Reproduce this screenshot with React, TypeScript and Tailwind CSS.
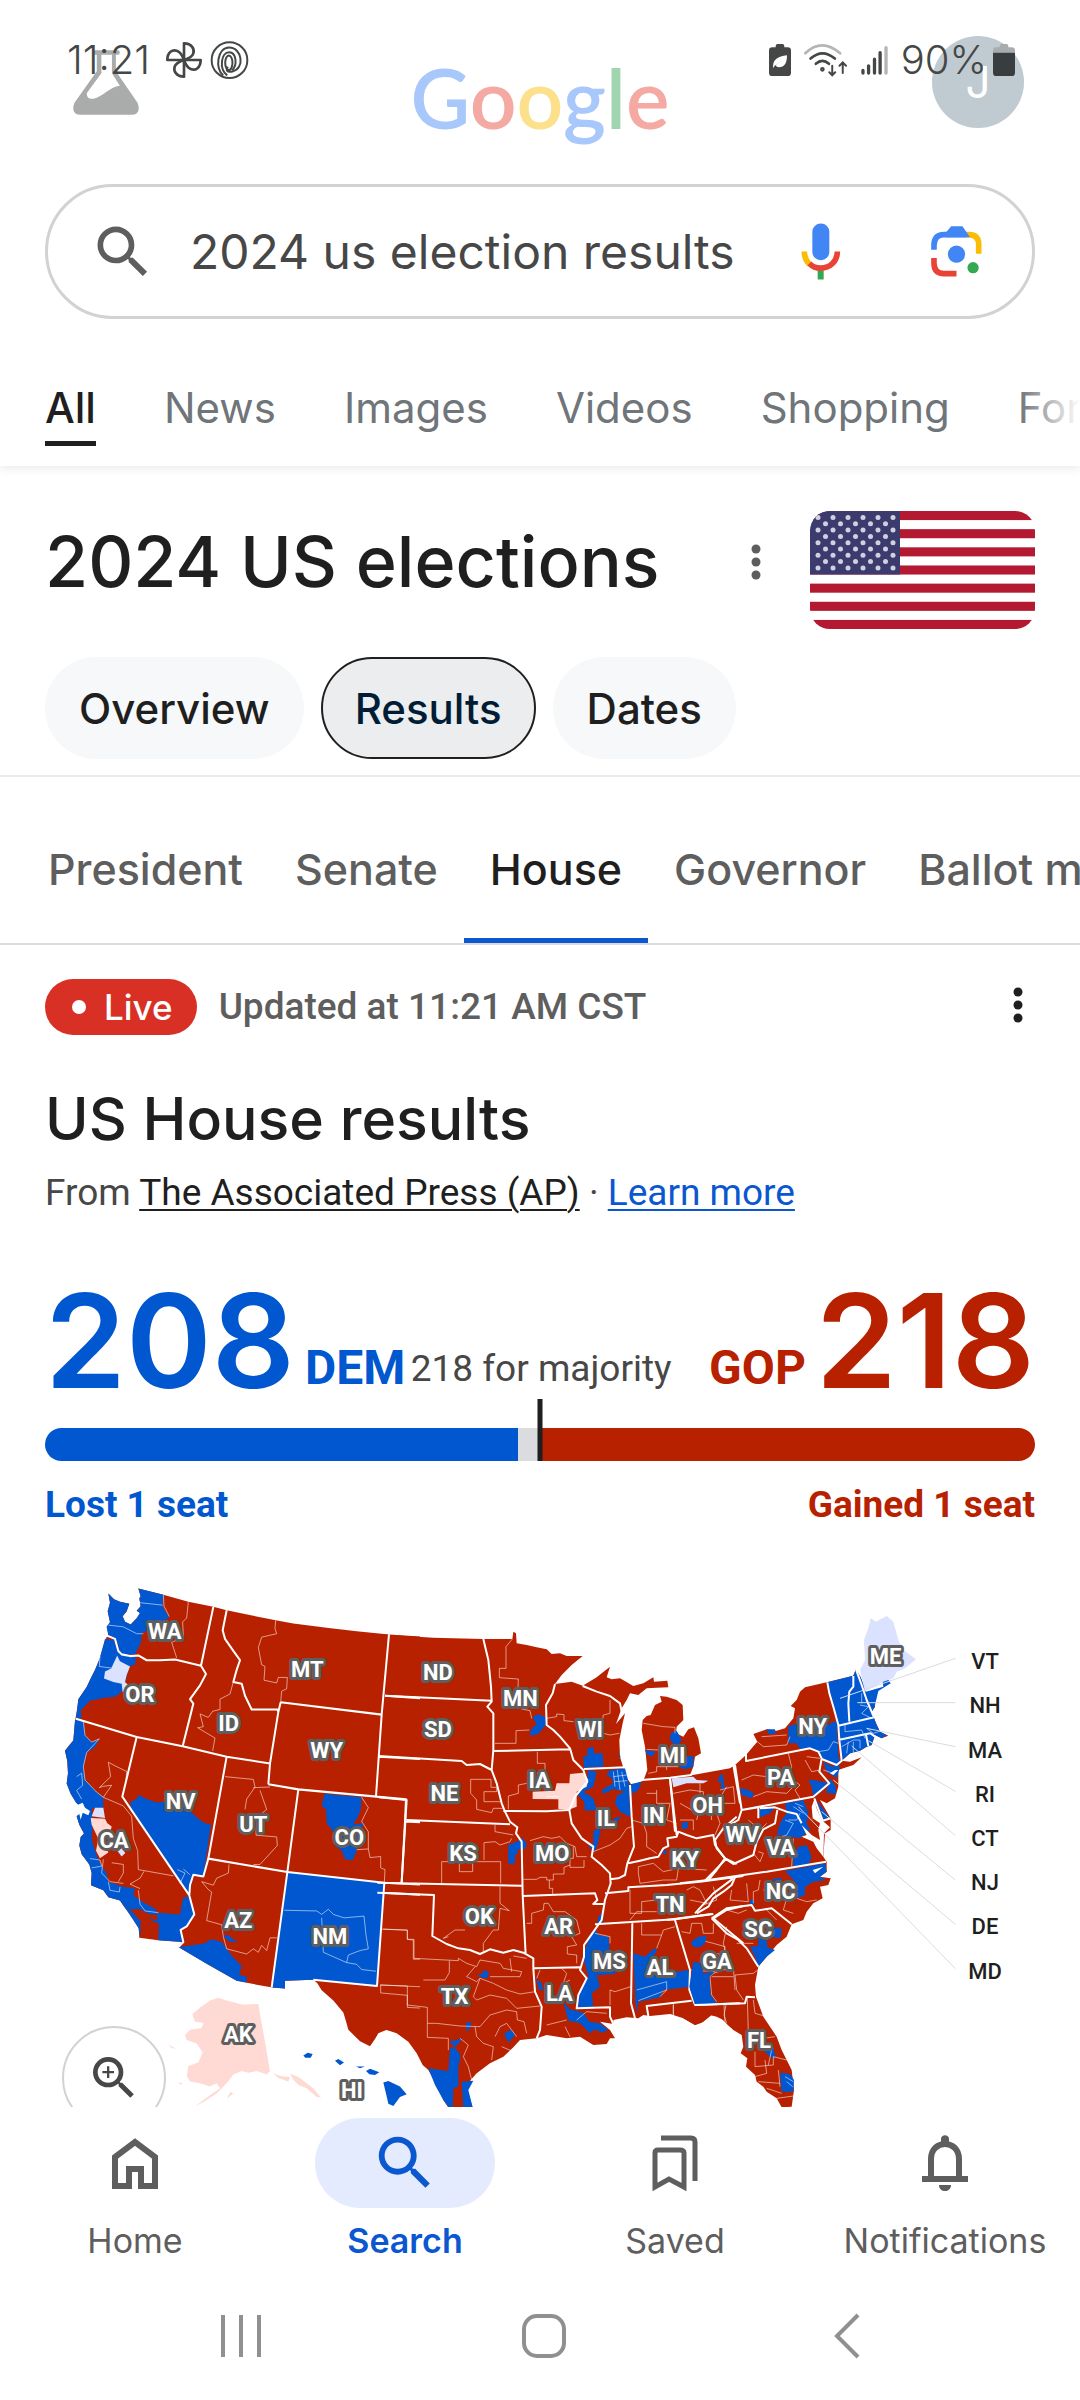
import { MdSearch, MdOutlineZoomIn } from 'react-icons/md';

const searchTabs = ['All', 'News', 'Images', 'Videos', 'Shopping', 'Forums'];
const races = ['President', 'Senate', 'House', 'Governor', 'Ballot measures'];
const chips = ['Overview', 'Results', 'Dates'];

interface MapPart {
  id: string;
  transform: string;
  labelTransform: string;
  land: string[];
  dem: string[];
  gop: string[];
  leanDem: string[];
  leanGop: string[];
  water: string[];
  districts: string[];
  borders: string[];
  labels: [string, number, number][];
}

// Three drawing sheets (west, central, east), placed side by side in one viewBox
const mapParts: MapPart[] = [
  {
    id: 'west',
    transform: 'scale(1 1.0332)',
    labelTransform: 'translate(0 0)',
    land: [
      'M205 68L222 85L240 92L268 98L260 120L248 134L255 150L272 158L290 140L300 125L290 118L302 105L298 82L302 76L295 54L370 72L445 92L520 107L560 117L640 133L707 146L760 155L860 168L950 178L1047 187L1140 193V1418L1132 1390L1115 1365L1090 1345L1065 1340L1040 1335L1015 1345L1005 1362L990 1383L960 1368L925 1335L918 1310L910 1285L880 1250L845 1220L832 1200L820 1190L735 1193V1215L697 1212L650 1204L590 1193L500 1143L415 1095L425 1080L355 1075L298 1068L296 1040L280 1015L262 990L250 975L240 960L205 950L190 930L153 915L155 880L148 855L125 825L118 800L122 775L132 765L118 740L110 715L130 700L125 685L108 675L92 650L80 620L84 590L82 555L75 525L88 508L100 495L105 440L112 400L115 375L140 340L152 315L165 290L178 260L185 240L195 205L205 185L200 165L210 152L203 120L210 95Z',
    ],
    dem: [
      'M205 68L222 85L240 92L268 98L260 120L248 134L255 150L272 158L290 140L300 125L290 118L302 105L298 82L302 76L295 54L370 72L368 102L375 120L388 135L372 150L345 158L322 175L305 185L303 210L285 245L240 245L232 210L205 190L200 165L210 152L203 120L210 95Z',
      'M195 200L225 205L235 240L288 252L285 275L265 280L262 300L250 350L225 368L190 372L150 380L135 395L122 408L125 430L108 432L112 400L115 375L140 340L152 315L165 290L178 260Z',
      'M105 435L130 440L135 480L155 500L178 490L165 515L140 530L130 570L135 610L170 645L190 660L190 690L155 692L158 740L155 780L170 830L185 860L200 880L205 905L250 920L285 925L280 945L310 965L348 985L352 1010L305 1015L300 1068L296 1040L262 990L240 960L205 950L190 930L153 915L155 880L148 855L125 825L118 800L122 775L132 765L118 740L110 715L130 700L108 675L92 650L80 620L84 590L82 555L75 525L100 495Z',
      'M428 955L445 945L462 1000L440 1035L420 1045L430 1080L355 1075L357 1028L325 1012L355 995L420 1000Z',
      'M272 672L290 665L296 653L320 665L350 675L380 672L440 690L475 722L495 735L513 738L490 890L460 885L448 943L272 690Z',
      'M415 1095L490 1085L515 1072L545 1080L575 1120L605 1150L597 1175L620 1180V1198L590 1193L500 1143Z',
      'M548 1062L565 1060L580 1072L595 1078L570 1080Z',
      'M740 877L1033 908L1011 1208L820 1190L735 1193V1215L697 1212Z',
      'M853 650L965 660L962 695L955 715L940 738L975 735L955 755L950 815L938 843L915 840L905 815L885 800L880 760L860 735L858 695L845 685Z',
      'M790 1410L803 1402L818 1405L812 1416L796 1416Z',
      'M885 1425L895 1420L912 1430L900 1438Z',
      'M948 1442L975 1442L960 1447Z',
      'M978 1455L990 1448L1018 1458L1005 1466L988 1464Z',
      'M1030 1488L1045 1484L1080 1500L1100 1522L1080 1530L1060 1556L1045 1550L1038 1520Z',
    ],
    gop: ['M268 985L300 985L330 1000L350 1000L352 1018L325 1012L300 1020L285 1000Z', 'M300 1025L330 1018L355 1030L350 1072L305 1066Z'],
    leanDem: [
      'M232 250L240 265L270 280L260 305L255 325L265 335L248 355L245 330L220 325L192 315L195 295L215 285Z',
      'M165 690L190 690L195 720L155 715Z',
      'M232 815L245 808L256 822L245 832Z',
    ],
    leanGop: [
      'M152 720L195 722L202 735L215 745L210 765L190 790L205 820L180 837L168 815L175 780L155 740Z',
      'M457 1290L480 1270L510 1250L535 1242L560 1250L610 1262L655 1260L662 1300L675 1370L690 1455L680 1465L650 1455L625 1460L605 1455L580 1465L560 1490L530 1520L490 1545L465 1558L495 1535L540 1505L530 1490L510 1500L480 1490L450 1485L440 1470L445 1440L475 1430L488 1400L470 1375L440 1365L435 1350L450 1335L485 1330L490 1315L465 1312Z',
      'M700 1462L725 1470L750 1472L745 1485L715 1475Z',
      'M750 1462L775 1472L800 1490L820 1505L843 1532L830 1530L800 1505L775 1495L760 1480Z',
      'M385 1378L408 1390L395 1388Z',
      'M415 1488L430 1490L420 1494Z',
      'M560 1535L572 1515L580 1520Z',
    ],
    water: ['M112 682L128 676L135 690L150 700L145 712L128 705L122 725L116 700Z'],
    districts: [
      'M205 160L250 165L290 185L310 185',
      'M300 95L368 102',
      'M445 92L440 140L428 150L430 195L395 210L405 240L410 255',
      'M370 72L372 105L388 135',
      'M180 250L178 280L215 285L232 250',
      'M707 146L705 170L710 185L665 195L655 225L665 275L675 280L672 320L710 328L715 312L742 312L740 345L725 352L722 384',
      'M580 325L570 360L540 375L540 405L518 410L505 428L480 418L490 455L473 458L525 488L518 525',
      'M130 440L135 480L155 500L178 490L140 530L130 570L135 610L170 645L190 660L215 625L190 628L178 632L212 600L205 558L228 570L260 585L258 610',
      'M190 660L250 685L275 715L280 780L293 815L295 870L400 888',
      'M215 850L250 855L250 880L235 905M312 875L300 895L270 912L300 925M190 840L185 880L210 905L250 910',
      'M295 930L300 970L315 990L355 995',
      'M555 600L640 608L645 630L620 665L615 695M640 632L690 630M660 640L680 695L650 720L648 770L710 775L712 800L660 855L640 855',
      'M567 855L565 880L530 895L520 915L485 905L505 928L515 935L500 1018L545 1030L550 1065L560 1100L620 1115L640 1100L655 1110L665 1090L680 1105L690 1068L710 1068',
      'M733 988L830 990L845 1000L865 985L880 1000L912 1010L972 1005L978 1060L985 1100L960 1105L925 1118L920 1140L850 1110L845 1010',
      'M920 1140L950 1145L965 1160L1008 1165',
      'M965 660L985 690L965 730L985 760L985 810L950 812M985 810L990 835L1022 832L1022 865L1035 870L1033 908',
      'M1030 1043L1102 1046L1102 1072L1120 1075L1120 1130L1140 1130M1022 1205L1140 1210M1022 1205V1228L1102 1235V1270L1140 1272',
      'M412 870L435 880L420 910M430 868L450 885',
      'M150 838L180 842L185 860L155 865M205 905L210 930L238 935L240 920',
      'M110 600L125 590L128 625L110 640L125 665',
    ],
    borders: [
      'M200 190L225 200L235 235L245 245L270 250L295 248L320 262L360 262L405 260L483 278',
      'M108 432L290 485L428 512L560 542L690 562',
      'M520 107L483 278L498 302L480 335L450 375L460 388L428 512',
      'M560 117L548 175L555 200L580 235L600 262L590 290L580 325L605 330L615 365L635 405L712 405L715 412',
      'M722 384L715 412L690 562L685 622',
      'M722 384L1025 420',
      'M1047 187L1025 420L1008 657',
      'M1035 365L1140 372M1018 542L1140 549',
      'M685 622L775 637L1098 666L1095 730L1085 907M1095 730L1140 732',
      'M775 637L742 877M505 838L742 877L1033 908L1140 913',
      'M560 542L505 838L490 890L460 885L450 915L448 945L463 1000L440 1035L422 1045L430 1080L415 1095',
      'M290 485L247 658L448 945',
      'M742 877L695 1212',
      'M1033 908L1011 1208L820 1190M1030 937L1140 943',
    ],
    labels: [
      ['WA', 374, 184], ['OR', 300, 372], ['ID', 566, 460], ['MT', 802, 298], ['WY', 860, 542], ['NV', 422, 695],
      ['UT', 640, 763], ['CO', 928, 802], ['CA', 222, 811], ['AZ', 595, 1052], ['NM', 870, 1098], ['AK', 595, 1393], ['HI', 936, 1562],
    ],
  },
  {
    id: 'central',
    transform: 'translate(1020 60)',
    labelTransform: 'translate(1020 60)',
    land: [
      'M-20 131L30 135L160 143L310 147L397 147L400 125L408 130L410 160L440 165L470 172L500 178L515 192L540 190L560 198L608 198L575 225L545 255L525 282L575 275L608 287L650 262L665 250L690 230L680 262L695 268L720 265L760 288L790 280L820 262L822 275L862 272L865 292L830 293L800 295L775 315L750 310L740 330L725 355L708 402L735 370L728 400L718 450L720 500L738 560L755 585L790 572L802 540L795 470L785 420L788 390L800 378L812 375L825 345L845 335L840 318L860 320L890 330L908 345L910 390L890 410L888 430L910 440L925 418L942 412L955 445L963 490L945 500L940 530L930 555L965 578L1000 565L1030 550L1060 530L1100 505V1335L1080 1328L1050 1310L1030 1290L1010 1280L990 1275L965 1298L945 1305L910 1285L870 1272L810 1278L790 1275L775 1285L740 1282L700 1290L700 1302L660 1295L690 1320L705 1345L690 1345L680 1362L640 1365L600 1340L560 1345L500 1335L470 1345L420 1350L400 1372L370 1400L330 1420L290 1450L272 1470L262 1500L280 1560L210 1560L190 1530L170 1485L145 1440L128 1425L110 1390L85 1355L50 1330L20 1320L-20 1325Z',
    ],
    dem: [
      'M645 1015L655 1035L685 1040L690 1090L705 1125V1152L650 1155L660 1190L635 1210L640 1250L595 1252L595 1215L625 1160L610 1100L625 1050Z',
      'M550 1235L570 1258L610 1268L628 1295L660 1300L685 1320L665 1328L645 1318L630 1330L600 1300L565 1292Z',
      'M468 1165L485 1180L490 1200L478 1200Z',
      'M625 540L650 545L640 590L610 605L640 625L650 660L615 662L612 635L590 610L620 580Z',
      'M665 600L700 580L695 565L680 555L690 540L735 535L748 585L750 680L720 665L705 640L712 615L735 605L700 597L670 612Z',
      'M700 685L725 680L705 700Z',
      'M640 722L662 715L655 755L645 785L625 770L640 760Z',
      'M610 500L622 498V475L640 470L642 490H668L670 530L612 533Z',
      'M458 380L475 373L497 382L497 405L475 432L448 437L455 415L470 403Z',
      'M385 765L410 755L428 745L440 760L438 775L412 780L413 792L405 795V820L385 822Z',
      'M145 1435L205 1443L210 1375L222 1370L242 1395L235 1430L235 1490L220 1495L218 1560L205 1550L190 1530L165 1485Z',
      'M245 1475L280 1472L265 1500L280 1560L250 1560Z',
      'M372 1330L395 1320L405 1335L385 1358Z',
      'M258 1298L275 1296L268 1318L260 1325Z',
      'M208 1355L248 1345L225 1372Z',
      'M290 1155L305 1152L312 1140L325 1145V1163L308 1163Z',
      'M655 980L670 965L668 1000L652 998Z',
      'M750 583L785 575L775 600L755 612Z',
      'M760 1090L795 1100L822 1075L832 1080L800 1130V1158L925 1140L930 1190L850 1200L840 1222L775 1235L768 1270Z',
      'M872 430L890 422L905 450L890 470L870 450Z',
      'M795 480L828 485L815 500L800 492Z',
      'M895 530L915 500L940 497L940 530L915 538Z',
      'M715 488L722 500L718 505Z',
      'M845 785L862 780L855 795Z',
      'M905 700L922 695V715L905 718Z',
    ],
    gop: ['M672 475L712 470L714 505L690 515L672 512Z'],
    leanDem: [],
    leanGop: ['M570 552L610 548L625 570L620 590L590 605L590 650L570 658L535 657V628L458 627V605L525 602L530 580L568 580Z'],
    water: [],
    districts: [
      'M397 147L378 170V235H358V263L415 267L412 345L425 357L450 362L455 385',
      'M345 460H408V422L448 420M500 385L530 380V372L552 374V392L580 395',
      'M640 400L665 405L670 375L690 370V330M670 405L670 430L690 435L718 430',
      'M472 485V520H495V545L470 550M385 658V618L415 610V585L440 580M500 620H535',
      'M272 568H333V592H350V605H312V635H360M272 568V610L290 630V658L335 668L340 655H370',
      'M345 705V725L400 735M185 880V815H362V880M238 820V845H278V820M312 810V758L345 755L360 765L390 755L395 745',
      'M450 752L490 740L515 745L540 740L560 760L585 770L590 800H620M580 770V805H570V832H612V810',
      'M430 868H470L480 862H500V870H520V852H552V832L570 825M508 870V895H518V912',
      'M360 890V940L388 962L360 955L355 1020L340 1020L310 1060V1085M190 1045L225 1020H255M190 1045L205 1040',
      'M440 1000H455V970L490 960L492 940H505L520 965L555 965L590 990L600 1030L575 1040L590 1065L562 1070V1092L590 1095V1120',
      'M0 1017L82 1020V1048H102V1105L235 1112V1105L260 1120L290 1130L300 1110L360 1120L370 1135L425 1145L420 1160L330 1160',
      'M208 1112V1148L195 1170L130 1170M0 1185L82 1188V1215L82 1245L142 1252V1300L170 1300L240 1308',
      'M142 1300V1342L205 1345L205 1380M285 1130L260 1160L290 1175L300 1165L340 1180L380 1200L420 1212L465 1205',
      'M300 1165L280 1220L290 1230L330 1215L380 1225L410 1255L480 1248M240 1308L300 1310L330 1275L380 1260L410 1265L412 1290L432 1295L440 1330',
      'M285 1310L290 1340L310 1360L340 1370L335 1410M240 1345L265 1365L250 1400L265 1430L275 1470M345 1340L360 1310L380 1300L410 1340M365 1370L400 1385',
      'M390 1105L395 1145M400 1098L440 1105',
      'M480 1140L470 1165M545 1135L560 1150L550 1180L570 1170M500 1305L560 1290M590 1290L620 1265L680 1270M555 1310L570 1340',
      'M690 1200L705 1205L752 1190M690 1200V1245M690 1060V1040L645 1030',
      'M785 1000V1035H845L850 1020L885 1010M845 1035L830 1075M905 1025L930 1030L935 1000H965L970 1030L1000 1030L1000 1000M960 1050L1000 1060L1035 1070L1030 1130M1000 1150L1060 1130L1065 1200',
      'M930 1140L1005 1145L990 1160L995 1215L1010 1235',
      'M750 900V970H785V935L830 930M830 965H770L750 990M920 900L940 890L960 900L980 940L930 930M1000 890L1010 930L970 945',
      'M775 830L820 820L850 845L895 835L890 870H850L780 880L775 850ZM895 835L980 840',
      'M755 690L790 700L800 730V770L830 790M830 600V640L870 640M800 610H830M870 640L860 690L890 700',
      'M880 610L930 600L970 605V640L1010 640L1040 590M950 690L960 650L1000 640L1020 700L1005 735M900 690H940V720',
      'M790 400L850 410L885 412V430M805 550L830 545V530L895 530M860 530V540M800 478L835 480',
      'M640 785L690 765L720 745L740 715L755 710',
      'M775 1232L860 1200L860 1175L770 1200M840 1220L860 1200',
      'M700 545L705 590M712 540L720 600M725 545L735 590M700 560L740 555M704 575L742 572',
      'M880 1240V1280L870 1272M1032 1245L1036 1320',
    ],
    borders: [
      'M15 317L335 332M-5 498L245 513L260 525L300 522L335 540L350 580L365 640L375 665L390 695L412 712L408 730L425 755L428 915L437 1095',
      'M310 147L325 210L333 290L335 335L322 350L340 370V480L335 540',
      'M340 483L570 478M370 663L500 664L565 660',
      'M80 690L390 703M-3 622L80 630L65 877M-8 878L425 887',
      'M-8 908L162 915L157 1038L200 1062L235 1075L270 1080L300 1092L330 1078L370 1088L400 1080L430 1088L460 1105V1135L600 1132',
      'M430 918L645 910L652 930L640 942L675 942',
      'M525 282L518 310L498 345L500 405L520 420L540 440L570 475L580 510L610 540L622 575L585 620L568 660L575 700L605 745L640 770L635 800L665 825L690 850L692 880L675 930L665 990L630 1040L612 1065L612 1100L600 1140L620 1165L595 1215L590 1255L690 1252L690 1280L700 1302',
      'M460 1135L465 1205L485 1250L480 1320L470 1345',
      'M612 537L735 532',
      'M608 288L650 305L690 318L720 340L725 365',
      'M750 585L755 680L762 770L742 820L735 855L715 865L690 868',
      'M745 820L780 812L810 805L835 800L850 775L865 768L862 745L890 740L895 725L920 735L950 745L1000 735L1005 765L1035 805L1070 822',
      'M755 572L870 563L935 555M870 565L890 735',
      'M675 910L745 903V892L860 885L960 875L1090 858M975 872L1040 805',
      'M645 1003L885 988L1000 972',
      'M757 1000L753 1240L765 1285M885 990L930 1140L928 1200L945 1245L1080 1240M805 1278L800 1248L935 1232',
      'M945 970L1000 910L1060 865M1000 985L1040 960L1090 948M1000 985L1030 1010L1090 1060',
      'M1060 525L1080 640M1030 715L1070 680',
    ],
    labels: [
      ['ND', 174, 246], ['SD', 174, 418], ['NE', 193, 610], ['KS', 249, 790], ['OK', 298, 978], ['TX', 224, 1218], ['MN', 421, 324],
      ['IA', 478, 572], ['MO', 517, 790], ['AR', 536, 1008], ['LA', 538, 1210], ['WI', 630, 418], ['IL', 678, 686], ['MS', 688, 1113],
      ['MI', 878, 496], ['IN', 821, 676], ['OH', 983, 646], ['KY', 915, 808], ['TN', 870, 942], ['AL', 840, 1133], ['GA', 1011, 1113],
    ],
  },
  {
    id: 'east',
    transform: 'translate(1740 60)',
    labelTransform: 'translate(1740 60)',
    land: [
      'M330 535L345 525L378 495L395 475L412 455L400 432L440 418L470 422L495 415L520 385L525 355L512 348L530 330L540 305L555 292L620 277L700 257L708 238L722 262L740 310L770 300L762 330L765 350L755 365L768 400L780 425L805 437L785 445L765 435L755 465L740 470L720 482L690 490L665 512L690 515L725 502L700 525L670 535L655 540L655 590L645 625L620 640L600 630L632 685L632 720L615 730L610 800L620 815L620 845L600 860L632 865L625 885L600 890L608 925L580 940L560 965L550 990L515 1003L500 1040L470 1065L440 1100L415 1130L405 1185L408 1220L430 1280L470 1340L485 1380L515 1440L522 1500L515 1550L485 1552L470 1525L440 1505L430 1490L410 1475L405 1455L378 1430L382 1405L362 1390L370 1370L365 1335L340 1320L318 1300L300 1280L275 1275L250 1295L225 1305L190 1285V560Z',
    ],
    dem: [
      'M622 277L700 257L708 238L722 262L740 310L770 300L762 330L765 350L755 365L768 400L780 425L800 435L785 445L765 435L755 465L740 470L720 482L690 490L665 512L658 450L650 395L640 340L628 310Z',
      'M738 305L790 290L785 250L800 262L812 280L775 303L765 345L755 360Z',
      'M505 408L540 400L620 405L650 392L655 500L660 512L655 540L640 525L605 505L595 485L570 475L540 478L530 460L505 460Z',
      'M440 418H465V432H445Z',
      'M565 568L590 572L625 580L605 605L580 617L575 590Z',
      'M360 595L380 598L402 610L395 625L365 615Z',
      'M610 515L640 530L660 530L650 565L620 545Z',
      'M630 565L648 590L648 612L618 608Z',
      'M590 630L630 685L610 690Z',
      'M495 640L550 630L565 670L560 700L570 720L540 745L500 738L470 735L480 700L500 668Z',
      'M417 657L465 652L450 670L420 682Z',
      'M535 770L560 765L575 800L565 825L520 830L518 800Z',
      'M495 843L615 820L620 845L600 860L618 870L580 875L555 890L555 915L530 925L530 880Z',
      'M460 865H485V885H460Z',
      'M390 930H402V942H390Z',
      'M390 1070L415 1068L415 1042L440 1050L442 1072L465 1080L440 1100L415 1130L405 1100Z',
      'M465 1012L487 1018L480 1045L455 1040Z',
      'M220 1115L245 1120L250 1150L285 1145L268 1160L272 1215L290 1240L225 1245L208 1190Z',
      'M213 1055L235 1040L260 1037L255 1060L240 1072L218 1070Z',
      'M430 1380L460 1370L467 1405L450 1400Z',
      'M480 1448L510 1452L522 1470L520 1505H485Z',
      'M300 555L308 552L315 598L303 598V575H292Z',
      'M188 697H203V715H188Z',
    ],
    gop: [],
    leanDem: [
      'M745 115L752 85L768 95L800 78L820 95L835 150L850 180L888 208L855 235L830 245L820 265L790 275L735 305L720 240L735 210L732 150Z',
      'M155 565L220 560L230 570L265 572L250 580L200 580L160 592Z',
    ],
    leanGop: [],
    water: [
      'M583 628L575 650L578 685L600 700L595 720L600 750L575 735L545 705L560 735L545 740L580 755L590 775L610 800L612 730L630 712L605 690L590 655Z',
      'M655 540L640 555L630 550L645 540Z',
      'M578 840L610 830L585 850Z',
    ],
    districts: [
      'M412 455L430 470L500 465L510 440M425 440L500 435',
      'M505 490L515 530L505 560L540 585L525 600L540 625M365 570L400 555L440 560M400 620L440 605L500 610L520 590',
      'M555 510L575 545L600 540M560 500L600 505M595 485L625 480L640 455L655 460M610 540L640 550',
      'M385 690L420 720L440 700M400 790L420 815L430 790L415 785M500 735L520 700L495 690M520 745L515 830M500 735L470 745L460 790',
      'M380 880L385 935L330 930L335 900M420 870L415 900L400 905V940M430 900H460M500 925L490 960L520 970M530 925L560 935L590 930M460 930L500 925',
      'M320 960L355 970L380 960M440 960L470 990M350 1060L400 1060M440 1050V1020',
      'M320 1010L310 1060L320 1100L290 1090M345 1155L400 1150L420 1135M345 1155L350 1200L370 1230M275 1160L340 1160',
      'M160 1245V1280M318 1245L312 1275L320 1300M382 1222L385 1330M400 1230L405 1270L440 1280M385 1330L430 1345L465 1340M405 1385V1430L460 1425V1400L500 1410M405 1460L440 1450L435 1410M415 1475L480 1480M440 1495L485 1510M470 1525L520 1518M455 1380L445 1425M475 1440L480 1490',
      'M675 405V425L725 420L735 445M665 470L700 450L720 450V475M700 455V490M685 455L680 490M720 345L745 350L725 370L755 385M725 340V310M740 415L760 430L790 420',
      'M505 690L530 690L540 670M520 650L550 670M525 640L550 650',
      'M225 620L240 650L270 645L275 690M300 600L340 590L345 640L310 640M180 640L215 660M240 610V580',
      'M495 1460L520 1475M500 1475L518 1490',
    ],
    borders: [
      'M378 490V513L570 475L595 485L605 505L598 545L628 580L580 620L365 660L345 525',
      'M622 277L628 310L640 350L655 405L658 450L665 512L650 525L605 507',
      'M655 407L762 382M655 450L735 433L752 430L765 440M738 435L745 468',
      'M700 258V290L688 305L685 340L688 395M708 238L725 285L740 330L762 382',
      'M365 660L355 690L310 715L285 750L290 775L315 805L340 822L400 795L410 755L430 718L465 700L472 660',
      'M365 660L415 652L415 685M420 655L465 652L500 665L530 672L545 700',
      'M180 880L265 870L440 845L618 815M315 805L290 840L265 870',
      'M345 862L335 885L310 905L280 925L265 950L230 970',
      'M140 990L275 972M275 985L320 955L395 945L405 962L455 955L515 1003',
      'M275 985L320 1030L355 1050L380 1075L415 1130',
      'M225 1245L375 1240L380 1220L405 1222',
      'M583 625L608 692L632 685M150 565L165 725',
    ],
    labels: [['NY', 578, 408], ['PA', 482, 562], ['WV', 367, 733], ['VA', 482, 772], ['NC', 482, 904], ['SC', 415, 1018], ['FL', 417, 1352], ['ME', 797, 199]],
  },
];

const callouts = [
  { name: 'VT', y: 213, line: 'M660 325L1006 205' },
  { name: 'NH', y: 345, line: 'M712 338H1006' },
  { name: 'MA', y: 480, line: 'M740 415L1006 470' },
  { name: 'RI', y: 612, line: 'M745 452L1006 604' },
  { name: 'CT', y: 745, line: 'M695 468L1006 737' },
  { name: 'NJ', y: 878, line: 'M640 570L1006 870' },
  { name: 'DE', y: 1010, line: 'M605 665L1006 1003' },
  { name: 'MD', y: 1145, line: 'M535 650L1006 1136' },
];

function Shapes({ paths, className }: { paths: string[]; className: string }) {
  return <path d={paths.join('')} className={className} />;
}

function ElectionMap() {
  return (
    <svg viewBox="0 0 3000 1680" className="block w-full font-[Roboto,sans-serif]" role="img" aria-label="US House results by district">
      {mapParts.map((part) => (
        <g key={part.id} transform={part.transform}>
          <Shapes paths={part.land} className="fill-[#b72100]" />
        </g>
      ))}
      {mapParts.map((part) => (
        <g key={part.id} transform={part.transform}>
          <Shapes paths={part.dem} className="fill-[#0057d0]" />
          <Shapes paths={part.gop} className="fill-[#b72100]" />
          <Shapes paths={part.leanDem} className="fill-[#dae2ff]" />
          <Shapes paths={part.leanGop} className="fill-[#ffdad4]" />
          <Shapes paths={part.water} className="fill-white" />
          <Shapes paths={part.districts} className="fill-none stroke-white/80 stroke-2" />
          <path d={part.borders.join('')} strokeWidth={6} className="fill-none stroke-white" strokeLinejoin="round" />
        </g>
      ))}
      <g transform="translate(1740 60)">
        {callouts.map((c) => (
          <g key={c.name}>
            <path d={c.line} strokeWidth={3} className="fill-none stroke-[#dadce0]" />
            <text x={1095} y={c.y + 23} textAnchor="middle" fontSize={66} className="fill-[#1f1f1f] font-medium">
              {c.name}
            </text>
          </g>
        ))}
      </g>
      {mapParts.map((part) => (
        <g key={part.id} transform={part.labelTransform}>
          {part.labels.map(([name, x, y]) => (
            <text
              key={name}
              x={x}
              y={y + 23}
              textAnchor="middle"
              fontSize={66}
              strokeWidth={18}
              paintOrder="stroke"
              strokeLinejoin="round"
              className="fill-white stroke-[#5e5e5e] font-bold"
            >
              {name}
            </text>
          ))}
        </g>
      ))}
    </svg>
  );
}

function UsFlag() {
  const stars = [];
  for (let row = 0; row < 9; row++) {
    for (let col = 0; col < (row % 2 ? 5 : 6); col++) {
      stars.push(<circle key={`${row}-${col}`} cx={8 + col * 15 + (row % 2 ? 7.5 : 0)} cy={6.5 + row * 6.3} r={2.5} fill="#d0d0e0" />);
    }
  }
  return (
    <svg viewBox="0 0 225 118" className="h-[118px] w-[225px] shrink-0 rounded-[20px]" role="img" aria-label="US flag">
      <rect width="225" height="118" fill="#fff" />
      {[0, 1, 2, 3, 4, 5, 6].map((i) => (
        <rect key={i} y={(i * 2 * 118) / 13} width="225" height={118 / 13} fill="#b31931" />
      ))}
      <rect width="90" height="63.5" fill="#3c3b6e" />
      {stars}
    </svg>
  );
}

function MoreDots() {
  return (
    <svg viewBox="0 0 10 36" className="h-9 w-[10px]" fill="currentColor" aria-hidden="true">
      <circle cx="5" cy="5" r="4.5" />
      <circle cx="5" cy="18" r="4.5" />
      <circle cx="5" cy="31" r="4.5" />
    </svg>
  );
}

function StatusBar() {
  return (
    <div className="absolute inset-x-0 top-[36px] flex h-12 items-center justify-between pr-[65px] pl-[67px] font-[Inter,sans-serif] text-[40px] leading-[48px] font-light text-[#444746]">
      <div className="flex items-center gap-4">
        <span>11:21</span>
        <svg viewBox="0 0 108 108" className="h-9 w-9" fill="none" stroke="currentColor" strokeWidth="8" strokeLinejoin="round">
          <path d="M54 54V4C78 4 86 22 82 34C78 46 66 50 54 54Z" />
          <path d="M54 54H104C104 78 88 86 76 82C64 78 58 66 54 54Z" />
          <path d="M54 54V104C30 104 22 86 26 74C30 62 42 58 54 54Z" />
          <path d="M54 54H4C4 30 20 22 32 26C44 30 50 42 54 54Z" />
        </svg>
        <svg viewBox="0 0 118 118" className="-ml-2 h-[39px] w-[39px]" fill="none" stroke="currentColor" strokeWidth="6">
          <circle cx="59" cy="58" r="54" />
          <path d="M40 104C14 84 22 20 58 20C98 20 106 84 68 92C50 96 48 88 54 78" />
          <path d="M52 104C26 84 34 34 58 34C80 34 84 76 66 88" />
          <ellipse cx="57" cy="66" rx="11" ry="22" />
        </svg>
      </div>
      <div className="flex items-center gap-[13px]">
        <svg viewBox="0 0 66 96" className="h-8 w-[22px]">
          <path d="M20 10V6Q20 0 26 0H40Q46 0 46 6V10H56Q66 10 66 20V86Q66 96 56 96H10Q0 96 0 86V20Q0 10 10 10Z" fill="currentColor" />
          <path d="M12 68Q12 38 54 34Q54 70 30 70Q22 70 20 64L38 50L16 66L14 72Z" fill="#fff" />
        </svg>
        <svg viewBox="0 0 134 100" className="h-[33px] w-11" fill="none" stroke="currentColor" strokeWidth="8" strokeLinecap="round">
          <path d="M4 28Q54 -20 110 28" opacity=".4" />
          <path d="M20 44Q56 12 94 44M36 60Q56 42 76 60" />
          <circle cx="56" cy="77" r="3" />
          <path d="M86 66V94M77 86L86 95L95 86M118 88V56M108 66L118 56L128 66" strokeWidth="6" />
        </svg>
        <svg viewBox="0 0 80 88" className="h-[29px] w-[27px]" stroke="currentColor" strokeWidth="10" strokeLinecap="round">
          <path d="M5 74V82M22 60V82M40 40V82M57 20V82" />
          <path d="M75 5V82" opacity=".4" />
        </svg>
        <div className="flex items-center gap-[6px]">
          <span>90%</span>
          <svg viewBox="0 0 66 96" className="h-8 w-[22px]">
            <path d="M20 10V6Q20 0 26 0H40Q46 0 46 6V10H56Q66 10 66 20V26H0V20Q0 10 10 10Z" fill="#a9acad" />
            <path d="M0 26H66V86Q66 96 56 96H10Q0 96 0 86Z" fill="#3a3d3f" />
          </svg>
        </div>
      </div>
    </div>
  );
}

function Header() {
  return (
    <header className="relative shrink-0 bg-white font-[Inter,sans-serif] shadow-[0_2px_10px_rgba(0,0,0,0.09)]">
      <div className="grid h-[184px] grid-cols-[1fr_auto_1fr] items-start">
        <svg viewBox="0 0 200 196" className="mt-[50px] ml-[73px] h-[65px] w-[66px]" aria-label="Labs">
          <path d="M66 0H136Q142 0 142 7T136 14H130V64L196 160Q208 196 176 196H24Q-8 196 4 160L72 64V14H66Q60 14 60 7T66 0ZM86 14V70L42 130Q40 150 62 147C90 142 110 112 142 108L118 70V14Z" fill="#a9acab" fillRule="evenodd" />
        </svg>
        <div className="mt-[49px] font-[Lato,sans-serif] text-[82px] leading-[96px] font-semibold" aria-label="Google">
          <span className="text-[#a8c7fa]">G</span>
          <span className="text-[#f4a9a3]">o</span>
          <span className="text-[#fde08b]">o</span>
          <span className="text-[#a8c7fa]">g</span>
          <span className="text-[#9fd6b0]">l</span>
          <span className="text-[#f4a9a3]">e</span>
        </div>
        <button className="mt-9 mr-14 flex h-[92px] w-[92px] items-center justify-center justify-self-end rounded-full bg-[#bfcad1] text-[44px] text-white">
          J
        </button>
      </div>
      <StatusBar />
      <form className="mx-[45px] flex h-[135px] items-center rounded-full border-[3px] border-[#d2d2d2] pr-[50px] pl-[41px]">
        <MdSearch className="h-[68px] w-[68px] shrink-0 text-[#5e5e5e]" />
        <input
          type="text"
          aria-label="Search"
          defaultValue="2024 us election results"
          className="ml-[33px] min-w-0 flex-1 text-[48px] text-[#474747] outline-none"
        />
        <button type="button" aria-label="Voice search" className="mr-[90px]">
          <svg viewBox="35 69 120 170" className="h-[57px] w-10">
            <rect x="69" y="70" width="51" height="110" rx="25" fill="#4285f4" />
            <path d="M85 210H103V238H85Z" fill="#34a853" />
            <path d="M45 154C45 170 50 182 60 192" stroke="#fbbc04" strokeWidth="17" fill="none" />
            <path d="M60 190C70 200 80 204 94 204C122 204 144 184 144 154" stroke="#ea4335" strokeWidth="17" fill="none" />
          </svg>
        </button>
        <button type="button" aria-label="Search by image">
          <svg viewBox="423 78 154 154" className="h-[51px] w-[51px]">
            <path d="M567 162V134Q567 104 537 104H530" stroke="#fbbc04" strokeWidth="17" fill="none" />
            <path d="M432 150V138Q432 104 462 104H530" stroke="#4285f4" strokeWidth="17" fill="none" />
            <path d="M468 98L484 79H518L541 112H468Z" fill="#4285f4" />
            <path d="M432 175V190Q432 222 462 222H500" stroke="#ea4335" strokeWidth="17" fill="none" />
            <circle cx="500" cy="163" r="26" fill="#4285f4" />
            <circle cx="550" cy="204" r="17" fill="#34a853" />
          </svg>
        </button>
      </form>
      <nav className="relative flex h-[147px] items-end gap-[68px] overflow-hidden pb-5 pl-[45px] text-[42px]">
        {searchTabs.map((tab) => (
          <a
            key={tab}
            href="#"
            className={
              tab === 'All'
                ? 'flex h-[72px] items-center border-b-[5px] border-[#1f1f1f] font-medium text-[#1f1f1f]'
                : 'flex h-[72px] items-center border-b-[5px] border-transparent text-[#70757a]'
            }
          >
            {tab}
          </a>
        ))}
        <div className="absolute inset-y-0 right-0 w-[60px] bg-gradient-to-r from-transparent to-white" />
      </nav>
    </header>
  );
}

function TopicHeader() {
  return (
    <section className="shrink-0 border-b-2 border-[#ebebeb] px-[45px] pt-[45px] pb-4 font-[Inter,sans-serif]">
      <div className="flex items-center">
        <h1 className="flex-1 pb-4 text-[70px] leading-[80px] font-medium text-[#1f1f1f]">2024 US elections</h1>
        <button aria-label="More options" className="mr-[49px] pb-4 text-[#5e5e5e]">
          <MoreDots />
        </button>
        <UsFlag />
      </div>
      <div className="mt-7 flex gap-[17px]">
        {chips.map((chip) => (
          <button
            key={chip}
            className={
              chip === 'Results'
                ? 'h-[102px] rounded-full border-2 border-[#1f1f1f] bg-[#ebedee] px-8 text-[42px] font-medium text-[#001d35]'
                : 'h-[102px] rounded-full bg-[#f7f8fa] px-[34px] text-[42px] font-medium text-[#1f1f1f]'
            }
          >
            {chip}
          </button>
        ))}
      </div>
    </section>
  );
}

function Scoreboard() {
  return (
    <div className="mt-[64px]">
      <div className="flex items-end justify-between">
        <p className="flex items-end gap-[10px] font-bold text-[#0057d0]">
          <span className="font-[Inter,sans-serif] text-[130px] leading-[120px] font-semibold">208</span>
          <span className="pb-2 text-[48px] leading-[50px]">DEM</span>
        </p>
        <p className="pb-2 text-[37px] leading-[48px] whitespace-nowrap text-[#474747]">218 for majority</p>
        <p className="ml-8 flex items-end gap-[10px] font-bold text-[#b72100]">
          <span className="pb-2 text-[48px] leading-[50px]">GOP</span>
          <span className="font-[Inter,sans-serif] text-[130px] leading-[120px] font-semibold">218</span>
        </p>
      </div>
      <div className="relative mt-[27px] flex h-[33px]">
        <div className="w-[473px] rounded-l-full bg-[#0057d0]" />
        <div className="w-6 bg-[#dadce0]" />
        <div className="flex-1 rounded-r-full bg-[#b72100]" />
        <div className="absolute bottom-0 left-1/2 h-[62px] w-[5px] -translate-x-1/2 bg-[#1f1f1f]" />
      </div>
      <div className="mt-[22px] flex justify-between text-[37px] leading-[44px] font-bold">
        <span className="text-[#0057d0]">Lost 1 seat</span>
        <span className="text-[#b72100]">Gained 1 seat</span>
      </div>
    </div>
  );
}

function BottomNav() {
  const item = 'flex flex-col items-center gap-[10px] text-[#5e5e5e]';
  return (
    <nav className="shrink-0 bg-white pt-[11px] font-[Inter,sans-serif]">
      <div className="grid grid-cols-4 text-[34px] leading-[46px]">
        <a href="#" className={item}>
          <span className="flex h-[90px] items-center">
            <svg viewBox="0 0 46 51" className="h-[51px] w-[46px]" fill="none" stroke="currentColor" strokeWidth="6">
              <path d="M3 48V19L23 4L43 19V48H29V31H17V48Z" />
            </svg>
          </span>
          Home
        </a>
        <a href="#" className="flex flex-col items-center gap-[10px] font-semibold text-[#0b57d0]">
          <span className="flex h-[90px] w-[180px] items-center justify-center rounded-full bg-[#e4ebfe]">
            <MdSearch className="h-[70px] w-[70px]" />
          </span>
          Search
        </a>
        <a href="#" className={item}>
          <span className="flex h-[90px] items-center">
            <svg viewBox="0 0 46 57" className="h-[57px] w-[46px]" fill="none" stroke="currentColor" strokeWidth="5">
              <path d="M3 52V18Q3 15 6 15H28Q32 15 32 18V52L17 44Z" />
              <path d="M9 3H39Q43 3 43 7V46" />
            </svg>
          </span>
          Saved
        </a>
        <a href="#" className={item}>
          <span className="flex h-[90px] items-center">
            <svg viewBox="0 0 46 56" className="h-14 w-[46px]" fill="none" stroke="currentColor" strokeWidth="6">
              <path d="M9 43V24C9 4 37 4 37 24V43" />
              <path d="M0 44H46" />
              <path d="M19 8V4C19 -1 27 -1 27 4V8ZM17 50H29C29 58 17 58 17 50Z" fill="currentColor" stroke="none" />
            </svg>
          </span>
          Notifications
        </a>
      </div>
      <div className="flex h-[136px] items-center justify-between px-[220px] pt-2 text-[#909090]">
        <button aria-label="Recent apps">
          <svg viewBox="0 0 42 44" className="h-11 w-[42px]" stroke="currentColor" strokeWidth="4">
            <path d="M3 1V43M21 1V43M39 1V43" />
          </svg>
        </button>
        <button aria-label="Home screen" className="mr-2">
          <svg viewBox="0 0 46 46" className="h-[46px] w-[46px]" fill="none" stroke="currentColor" strokeWidth="4">
            <rect x="3" y="3" width="40" height="40" rx="13" />
          </svg>
        </button>
        <button aria-label="Back">
          <svg viewBox="0 0 26 46" className="h-[46px] w-[26px]" fill="none" stroke="currentColor" strokeWidth="4">
            <path d="M24 2L3 23L24 44" />
          </svg>
        </button>
      </div>
    </nav>
  );
}

export default function App() {
  return (
    <div className="flex h-screen flex-col overflow-hidden bg-white font-[Roboto,sans-serif] text-[#1f1f1f]">
      <Header />
      <TopicHeader />
      <nav className="flex h-[168px] shrink-0 overflow-hidden border-b-2 border-[#dadce0] pl-[22px] font-[Inter,sans-serif] text-[43px]">
        {races.map((race) => (
          <a
            key={race}
            href="#"
            className={
              race === 'House'
                ? 'flex items-center border-b-[5px] border-[#0b57d0] px-[26px] pt-6 font-medium whitespace-nowrap text-[#1f1f1f]'
                : 'flex items-center border-b-[5px] border-transparent px-[26px] pt-6 font-medium whitespace-nowrap text-[#5e5e5e]'
            }
          >
            {race}
          </a>
        ))}
      </nav>
      <main className="min-h-0 flex-1 overflow-hidden pt-[34px]">
        <div className="px-[45px]">
          <div className="flex h-14 items-center">
            <span className="flex h-14 items-center gap-[18px] rounded-full bg-[#d93025] pr-6 pl-[27px] font-[Inter,sans-serif] text-[35px] font-medium text-white">
              <span className="h-[14px] w-[14px] rounded-full bg-white" />
              Live
            </span>
            <span className="ml-[22px] flex-1 text-[37px] font-medium text-[#5e5e5e]">Updated at 11:21 AM CST</span>
            <button aria-label="More options" className="mr-3 pb-1">
              <MoreDots />
            </button>
          </div>
          <h2 className="mt-[46px] font-[Inter,sans-serif] text-[59px] leading-[76px] font-medium">US House results</h2>
          <p className="mt-3 text-[37px] leading-[48px] text-[#474747]">
            From{' '}
            <a href="#" className="text-[#1f1f1f] underline decoration-2 underline-offset-4">
              The Associated Press (AP)
            </a>{' '}
            ·{' '}
            <a href="#" className="text-[#0b57d0] underline decoration-2 underline-offset-4">
              Learn more
            </a>
          </p>
          <Scoreboard />
        </div>
        <div className="relative mt-[43px] px-10">
          <ElectionMap />
          <button
            aria-label="Zoom in"
            className="absolute top-[456px] left-[62px] flex h-[104px] w-[104px] items-center justify-center rounded-full border-2 border-[#d2d2d2] bg-white text-[#474747]"
          >
            <MdOutlineZoomIn className="h-14 w-14" />
          </button>
        </div>
      </main>
      <BottomNav />
    </div>
  );
}
